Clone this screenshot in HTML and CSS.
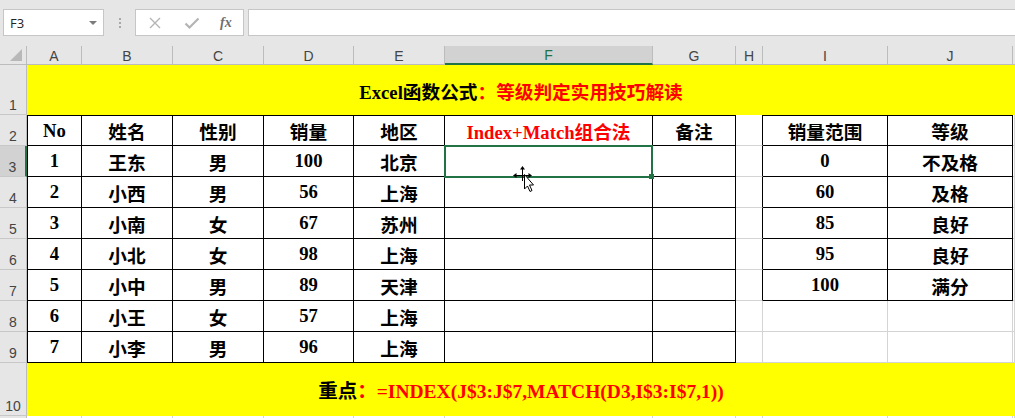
FILE: index.html
```html
<!DOCTYPE html>
<html lang="zh-CN">
<head>
<meta charset="utf-8">
<title>Excel</title>
<link rel="stylesheet" href="styles.css">
</head>
<body>
<div class="app">
  <div class="toolbar">
    <div class="namebox"><span class="nbtext">F3</span><span class="caret"></span></div>
    <div class="grip"><span></span><span></span><span></span></div>
    <div class="fxbox">
      <svg class="ico" width="14" height="14" viewBox="0 0 14 14"><path d="M2 2 L12 12 M12 2 L2 12" stroke="#b4b4b4" stroke-width="1.4" fill="none"/></svg>
      <svg class="ico" width="16" height="14" viewBox="0 0 16 14"><path d="M1.5 7.5 L5.5 11.5 L14.5 2.5" stroke="#b4b4b4" stroke-width="2.2" fill="none"/></svg>
      <span class="fx">fx</span>
    </div>
    <div class="finput"></div>
  </div>

  <div class="sheet">
    <!-- column headers -->
    <div class="ch corner"><svg width="12" height="12" viewBox="0 0 12 12"><polygon points="12,0 12,12 0,12" fill="#b8b8b8"/></svg></div>
    <div class="ch">A</div><div class="ch">B</div><div class="ch">C</div><div class="ch">D</div><div class="ch">E</div>
    <div class="ch chsel">F</div><div class="ch">G</div><div class="ch">H</div><div class="ch">I</div><div class="ch">J</div><div class="ch last"></div>

    <!-- row 1 -->
    <div class="rh">1</div>
    <div class="c yellow span">Excel函数公式<span class="r">：等级判定实用技巧解读</span></div>

    <!-- row 2 -->
    <div class="rh">2</div>
    <div class="c t top l">No</div><div class="c t top">姓名</div><div class="c t top">性别</div><div class="c t top">销量</div><div class="c t top">地区</div>
    <div class="c t top r">Index+Match组合法</div><div class="c t top">备注</div>
    <div class="c hr"></div><div class="c t top">销量范围</div><div class="c t top">等级</div><div class="c"></div>

    <!-- row 3 -->
    <div class="rh rhsel">3</div>
    <div class="c t l">1</div><div class="c t">王东</div><div class="c t">男</div><div class="c t">100</div><div class="c t">北京</div>
    <div class="c t f3"><div class="sel"><div class="handle"></div></div></div><div class="c t"></div>
    <div class="c hr"></div><div class="c t">0</div><div class="c t">不及格</div><div class="c"></div>

    <!-- row 4 -->
    <div class="rh">4</div>
    <div class="c t l">2</div><div class="c t">小西</div><div class="c t">男</div><div class="c t">56</div><div class="c t">上海</div>
    <div class="c t"></div><div class="c t"></div>
    <div class="c hr"></div><div class="c t">60</div><div class="c t">及格</div><div class="c"></div>

    <!-- row 5 -->
    <div class="rh">5</div>
    <div class="c t l">3</div><div class="c t">小南</div><div class="c t">女</div><div class="c t">67</div><div class="c t">苏州</div>
    <div class="c t"></div><div class="c t"></div>
    <div class="c hr"></div><div class="c t">85</div><div class="c t">良好</div><div class="c"></div>

    <!-- row 6 -->
    <div class="rh">6</div>
    <div class="c t l">4</div><div class="c t">小北</div><div class="c t">女</div><div class="c t">98</div><div class="c t">上海</div>
    <div class="c t"></div><div class="c t"></div>
    <div class="c hr"></div><div class="c t">95</div><div class="c t">良好</div><div class="c"></div>

    <!-- row 7 -->
    <div class="rh">7</div>
    <div class="c t l">5</div><div class="c t">小中</div><div class="c t">男</div><div class="c t">89</div><div class="c t">天津</div>
    <div class="c t"></div><div class="c t"></div>
    <div class="c hr"></div><div class="c t">100</div><div class="c t">满分</div><div class="c"></div>

    <!-- row 8 -->
    <div class="rh">8</div>
    <div class="c t l">6</div><div class="c t">小王</div><div class="c t">女</div><div class="c t">57</div><div class="c t">上海</div>
    <div class="c t"></div><div class="c t"></div>
    <div class="c"></div><div class="c"></div><div class="c"></div><div class="c"></div>

    <!-- row 9 -->
    <div class="rh">9</div>
    <div class="c t l">7</div><div class="c t">小李</div><div class="c t">男</div><div class="c t">96</div><div class="c t">上海</div>
    <div class="c t"></div><div class="c t"></div>
    <div class="c"></div><div class="c"></div><div class="c"></div><div class="c"></div>

    <!-- row 10 -->
    <div class="rh">10</div>
    <div class="c yellow span big">重点<span class="r">：=INDEX(J$3:J$7,MATCH(D3,I$3:I$7,1))</span></div>

    <!-- row 11 (only a sliver is visible) -->
    <div class="rh"></div>
    <div class="c"></div><div class="c"></div><div class="c"></div><div class="c"></div><div class="c"></div>
    <div class="c"></div><div class="c"></div><div class="c"></div><div class="c"></div><div class="c"></div><div class="c"></div>
  </div>

  <svg class="cursor" width="26" height="32" viewBox="0 0 26 32">
    <g stroke="#000" stroke-width="1" fill="none">
      <path d="M10.5 4 V16 M4 10.5 H17"/>
    </g>
    <polygon points="10.5,1 8,4.5 13,4.5" fill="#000"/>
    <polygon points="1,10.5 4.5,8 4.5,13" fill="#000"/>
    <polygon points="20,10.5 16.5,8 16.5,13" fill="#000"/>
    <polygon points="12.5,9.5 12.5,24 15.5,21 18,26.5 20,25.5 17.5,20 21.5,20" fill="#fff" stroke="#000" stroke-width="1"/>
  </svg>
</div>
</body>
</html>
```

FILE: styles.css
```css
* { box-sizing: border-box; }
html, body { margin: 0; padding: 0; }
body {
  width: 1015px;
  height: 418px;
  overflow: hidden;
  background: #ffffff;
}
.app {
  position: relative;
  width: 1015px;
  height: 418px;
  overflow: hidden;
  font-family: "Liberation Sans", Arial, sans-serif;
}

/* toolbar */
.toolbar {
  height: 46px;
  background: #e6e6e6;
  display: flex;
  align-items: flex-start;
  padding-top: 9px;
}
.namebox {
  margin-left: 3px;
  width: 101px;
  height: 27px;
  background: #fff;
  border: 1px solid #c6c6c6;
  display: flex;
  align-items: center;
  justify-content: space-between;
  padding: 0 6px 0 6px;
}
.nbtext {
  font-size: 13px;
  color: #222;
  font-family: "Open Sans", "Liberation Sans", sans-serif;
}
.caret {
  width: 0;
  height: 0;
  border-left: 4px solid transparent;
  border-right: 4px solid transparent;
  border-top: 4px solid #7b7b7b;
  margin-top: 1px;
}
.grip {
  width: 31px;
  height: 27px;
  display: flex;
  flex-direction: column;
  align-items: center;
  justify-content: center;
  gap: 2px;
}
.grip span {
  width: 2px;
  height: 2px;
  background: #a8a8a8;
}
.fxbox {
  width: 109px;
  height: 27px;
  background: #fff;
  border: 1px solid #c6c6c6;
  display: flex;
  align-items: center;
  padding-left: 12px;
  gap: 22px;
}
.ico { display: block; }
.fx {
  font-family: "Liberation Serif", serif;
  font-style: italic;
  font-weight: 700;
  font-size: 14px;
  color: #6f6f6f;
  margin-left: -2px;
}
.finput {
  flex: 1;
  margin-left: 4px;
  height: 27px;
  background: #fff;
  border: 1px solid #c6c6c6;
  border-right: none;
}

/* sheet grid */
.sheet {
  display: grid;
  grid-template-columns: 27px 55px 91px 91px 90px 91px 208px 83px 27px 125px 125px 1fr;
  grid-template-rows: 19px 50px repeat(8, 31px) 53px 20px;
  width: 1015px;
}
.ch {
  background: #e6e6e6;
  border-right: 1px solid #bcbcbc;
  border-bottom: 1px solid #bcbcbc;
  font-size: 14px;
  color: #444;
  display: flex;
  align-items: center;
  justify-content: center;
  padding-top: 1px;
}
.ch.last { border-right: none; }
.corner {
  justify-content: flex-end;
  align-items: flex-end;
  padding: 0 4px 3px 0;
}
.corner svg { display: block; }
.chsel {
  background: #d2d2d2;
  border-bottom: 2px solid #217346;
  color: #217346;
}
.rh {
  background: #e6e6e6;
  border-right: 1px solid #bcbcbc;
  border-bottom: 1px solid #c8c8c8;
  font-size: 14px;
  color: #444;
  display: flex;
  align-items: flex-end;
  justify-content: center;
  padding-bottom: 1px;
  line-height: 16px;
}
.rhsel {
  background: #d2d2d2;
  border-right: 2px solid #217346;
}

.c {
  border-right: 1px solid #d4d4d4;
  border-bottom: 1px solid #d4d4d4;
  display: flex;
  align-items: center;
  justify-content: center;
  font-family: "Liberation Serif", "Noto Sans CJK SC", serif;
  font-weight: 700;
  font-size: 18.67px;
  color: #000;
  white-space: nowrap;
  background: #fff;
}
.c.t {
  border-right-color: #000;
  border-bottom-color: #000;
}
.c.top { border-top: 1px solid #000; }
.c.l { border-left: 1px solid #000; }
.c.hr { border-right-color: #000; }
.yellow {
  background: #ffff00;
  border: none;
}
.span { grid-column: 2 / -1; }
.big { font-size: 19.5px; }
.r { color: #ff0000; }

.f3 { position: relative; }
.sel {
  position: absolute;
  left: -1px;
  top: -1px;
  right: -1px;
  bottom: -2px;
  border: 2px solid #217346;
}
.handle {
  position: absolute;
  right: -3px;
  bottom: -3px;
  width: 5px;
  height: 5px;
  background: #217346;
}

.cursor {
  position: absolute;
  left: 512px;
  top: 165px;
}
```
